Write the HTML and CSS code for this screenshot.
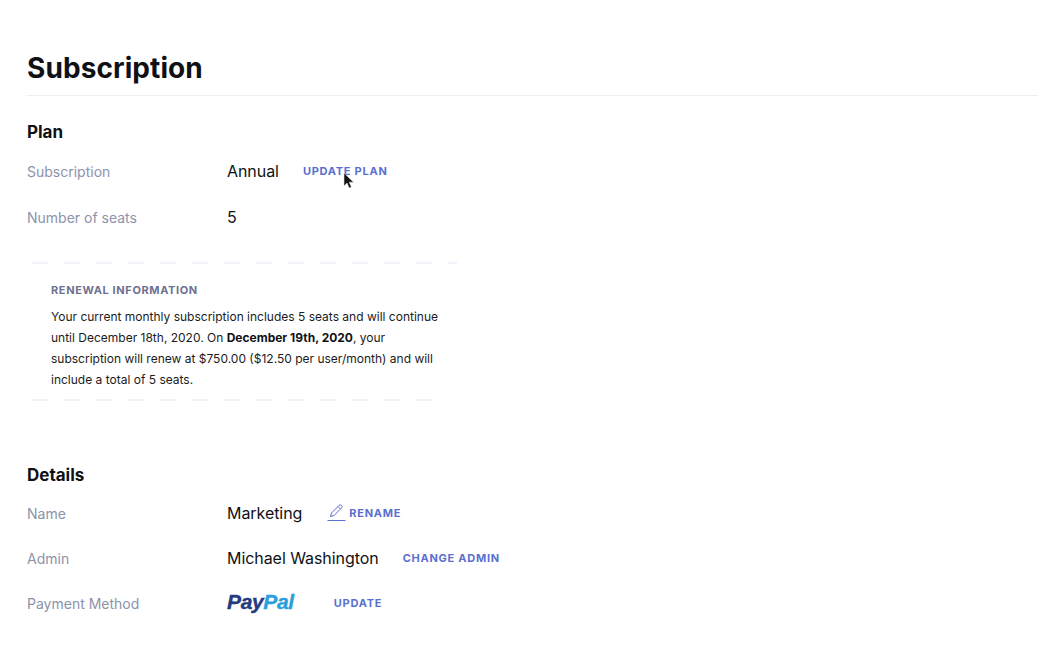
FILE: index.html
```html
<!DOCTYPE html>
<html lang="en">
<head>
    <meta charset="UTF-8">
    <meta name="viewport" content="width=device-width, initial-scale=1.0">
    <title>Subscription</title>
    <link rel="stylesheet" href="styles.css">
</head>
<body>
    <h1>Subscription</h1>

    <section class="plan">
        <h2>Plan</h2>
        <div class="row">
            <span class="label">Subscription</span>
            <div class="value">
                <span>Annual</span>
                <a class="action action-plan">Update Plan</a>
            </div>
        </div>
        <div class="row">
            <span class="label">Number of seats</span>
            <div class="value"><span>5</span></div>
        </div>

        <div class="renewal">
            <h3>Renewal Information</h3>
            <p>Your current monthly subscription includes 5 seats and will continue until December 18th, 2020. On <b>December 19th, 2020</b>, your subscription will renew at $750.00 ($12.50 per user/month) and will include a total of 5 seats.</p>
        </div>

        <!-- mouse pointer caught in the capture -->
        <svg class="cursor" width="12" height="18" viewBox="0 0 12 18">
            <path d="M1 1v13l3-3 2.200 5 2.200-1-2.200-4.800H10.500z" fill="#111" stroke="#ddd" stroke-width="0.600"/>
        </svg>
    </section>

    <section class="details">
        <h2>Details</h2>
        <div class="row row-name">
            <span class="label">Name</span>
            <div class="value">
                <span>Marketing</span>
                <svg class="pencil" width="19" height="18" viewBox="0 0 19 18" fill="none" stroke="#5a6fd0" stroke-width="1">
                    <path d="M3.500 12.500l1-3.500 7.500-7.500c.8-.8 1.800-.8 2.500 0s.8 1.700 0 2.500L7 11.500z"/>
                    <path d="M11 2.500l2.500 2.500"/>
                    <path d="M0.500 16.500h18"/>
                </svg>
                <a class="action action-rename">Rename</a>
            </div>
        </div>
        <div class="row">
            <span class="label">Admin</span>
            <div class="value">
                <span>Michael Washington</span>
                <a class="action action-admin">Change Admin</a>
            </div>
        </div>
        <div class="row">
            <span class="label">Payment Method</span>
            <div class="value">
                <span class="paypal"><i class="pay">Pay</i><i class="pal">Pal</i></span>
                <a class="action action-update">Update</a>
            </div>
        </div>
    </section>
</body>
</html>
```

FILE: styles.css
```css
* {
    margin: 0;
    padding: 0;
    box-sizing: border-box;
    font-family: Inter, "Liberation Sans", sans-serif;
}
body {
    padding: 51px 0 0 27px;
    background: #fff;
    color: #0f1115;
    overflow: hidden;
}
h1 {
    font-size: 28px;
    line-height: 34px;
    font-weight: 700;
    letter-spacing: 0.08px;
    padding-bottom: 10px;
    border-bottom: 1px solid #eceef2;
}
h2 {
    font-size: 17px;
    line-height: 20px;
    font-weight: 700;
}
.plan {
    position: relative;
    padding-top: 26px;
}
.details {
    margin-top: 64px;
}
.row {
    display: grid;
    grid-template-columns: 200px 1fr;
    align-items: center;
    height: 24px;
    margin-top: 17px;
}
.row + .row {
    margin-top: 22px;
}
.details .row {
    margin-top: 21px;
}
.details .row-name {
    margin-top: 16px;
}
.label {
    font-size: 14px;
    color: #8d92ab;
}
.value {
    display: flex;
    align-items: center;
    font-size: 16px;
    letter-spacing: -0.06px;
}
.action {
    font-size: 11px;
    font-weight: 700;
    letter-spacing: 0.74px;
    text-transform: uppercase;
    color: #5a6fd0;
}
.action-plan {
    margin-left: 24px;
}
.action-rename {
    margin-left: 3px;
}
.action-admin {
    margin-left: 24px;
}
.action-update {
    margin-left: 40px;
}
.pencil {
    margin-left: 25px;
}
.renewal {
    width: 430px;
    margin-top: 33px;
    padding: 20px 6px 11px 24px;
    background:
        repeating-linear-gradient(to right, #f0f3f9 0 16px, transparent 16px 32px) 5px 0 / 425px 2px no-repeat,
        repeating-linear-gradient(to right, #f0f3f9 0 16px, transparent 16px 32px) 5px 100% / 401px 2px no-repeat;
}
.renewal h3 {
    font-size: 11px;
    line-height: 16px;
    font-weight: 700;
    letter-spacing: 0.62px;
    text-transform: uppercase;
    color: #6d7291;
}
.renewal p {
    margin-top: 8px;
    font-size: 12px;
    line-height: 21px;
    color: #1a1c22;
}
.renewal b {
    font-weight: 700;
    color: #0f1115;
}
.paypal {
    font-family: "Liberation Sans", sans-serif;
    font-size: 21px;
    line-height: 20px;
    font-weight: 700;
    letter-spacing: -0.35px;
    -webkit-text-stroke: 0.4px;
    margin-top: -2px;
}
.paypal i {
    font-family: inherit;
}
.pay {
    color: #253b80;
}
.pal {
    color: #2a9fdc;
}
.cursor {
    position: absolute;
    left: 316px;
    top: 76px;
}
```
